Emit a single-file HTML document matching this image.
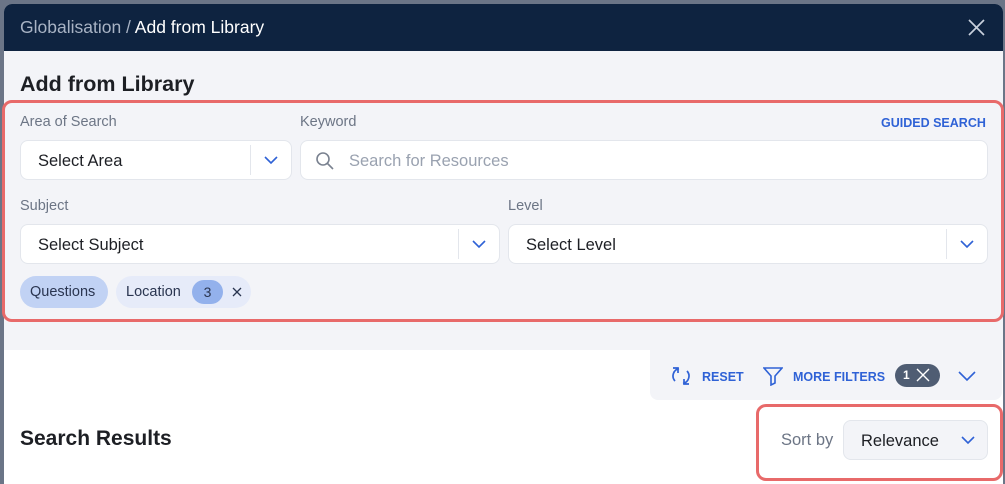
<!DOCTYPE html>
<html><head><style>
*{box-sizing:border-box;margin:0;padding:0}
body{width:1005px;height:482px;overflow:hidden;background:#6b7587;font-family:"Liberation Sans","DejaVu Sans",sans-serif;position:relative}
.modal{position:absolute;left:4px;top:4px;width:999px;height:480px;background:#fff;border-radius:8px 8px 0 0;overflow:hidden}
.hdr{height:47px;background:#0e2340;color:#fff;font-size:17.5px;padding:13px 0 0 16px}
.hdr .g{color:#a8b3c4}
.body{position:absolute;left:0;top:47px;width:999px;height:299px;background:#f3f4f8}
h1{position:absolute;left:16px;top:21px;font-size:21.5px;font-weight:bold;color:#1d1f24}
.red{position:absolute;border:3px solid #e86a6a;border-radius:10px}
.lbl{position:absolute;font-size:14.5px;color:#6c7585}
.inp{position:absolute;background:#fff;border:1px solid #e3e6ec;border-radius:8px;height:40px;font-size:16.5px;color:#1d1f24;padding:11px 0 0 17px}
.inp .sep{position:absolute;right:40px;top:4px;bottom:4px;border-left:1px solid #e3e6ec}
.chev{position:absolute;right:12px;top:14px}
.chip{position:absolute;height:32px;border-radius:16px;font-size:14.5px;color:#2a3550;padding:8px 10px}
.blue{color:#2f62d6;font-weight:bold;font-size:12.5px;position:absolute}
</style></head><body>
<div class="modal">
<div class="hdr"><span class="g">Globalisation / </span>Add from Library</div>
<svg style="position:absolute;right:18px;top:15px" width="17" height="17" viewBox="0 0 17 17"><path d="M1 1L16 16M16 1L1 16" stroke="#c8d0dc" stroke-width="1.7"/></svg>
<div class="body">
<h1>Add from Library</h1>
</div>
<div style="position:absolute;left:646px;top:346px;width:352px;height:50px;background:#f3f4f8;border-radius:0 0 8px 8px"></div>
<svg style="position:absolute;left:666px;top:361px" width="22" height="22" viewBox="0 0 22 22" fill="none" stroke="#2f62d6" stroke-width="1.7"><path d="M5 16A7.5 7.5 0 0 1 9 3.6M3 3h5v5M17 6A7.5 7.5 0 0 1 13 18.4M19 19h-5v-5"/></svg>
<div class="blue" style="left:698px;top:366px">RESET</div>
<svg style="position:absolute;left:759px;top:362px" width="20" height="20" viewBox="0 0 20 20" fill="none" stroke="#2f62d6" stroke-width="1.6"><path d="M1 2h18l-7 8v7l-4 2v-9z"/></svg>
<div class="blue" style="left:789px;top:366px">MORE FILTERS</div>
<div style="position:absolute;left:891px;top:360px;width:45px;height:23px;border-radius:12px;background:#4f5d73;color:#fff;font-size:12px;font-weight:bold;padding:4px 0 0 8px">1</div>
<svg style="position:absolute;left:912px;top:364px" width="14" height="14" viewBox="0 0 14 14"><path d="M1 1L13 13M13 1L1 13" stroke="#fff" stroke-width="1.4"/></svg>
<svg style="position:absolute;left:953px;top:366px" width="20" height="12" viewBox="0 0 20 12"><path d="M2 2l8 8 8-8" fill="none" stroke="#2f62d6" stroke-width="1.6"/></svg>
<div style="position:absolute;left:16px;top:423px;font-size:21px;font-weight:bold;color:#1d1f24">Search Results</div>
<div style="position:absolute;left:777px;top:427px;font-size:16.5px;color:#6c7585">Sort by</div>
<div class="inp" style="left:839px;top:416px;width:145px;background:#f3f4f8;padding-left:17px">Relevance<svg class="chev" style="top:15px" width="14" height="9" viewBox="0 0 14 9"><path d="M1 1l6 6 6-6" fill="none" stroke="#2f62d6" stroke-width="1.6"/></svg></div>
</div>
<div class="red" style="left:2px;top:100px;width:1002px;height:222px"></div>
<div class="red" style="left:756px;top:404px;width:247px;height:77px"></div>
<div class="lbl" style="left:20px;top:114px">Area of Search</div>
<div class="lbl" style="left:300px;top:114px">Keyword</div>
<div class="blue" style="left:881px;top:116px">GUIDED SEARCH</div>
<div class="inp" style="left:20px;top:140px;width:272px">Select Area<div class="sep"></div><svg class="chev" width="16" height="10" viewBox="0 0 16 10"><path d="M2 2l6 6 6-6" fill="none" stroke="#2f62d6" stroke-width="1.6"/></svg></div>
<div class="inp" style="left:300px;top:140px;width:688px;color:#9aa2b0;padding-left:48px">Search for Resources
<svg style="position:absolute;left:14px;top:10px" width="20" height="20" viewBox="0 0 20 20" fill="none" stroke="#7a8290" stroke-width="1.6"><circle cx="8" cy="8" r="6"/><path d="M12.5 12.5L18 18"/></svg></div>
<div class="lbl" style="left:20px;top:198px">Subject</div>
<div class="lbl" style="left:508px;top:198px">Level</div>
<div class="inp" style="left:20px;top:224px;width:480px">Select Subject<div class="sep"></div><svg class="chev" width="16" height="10" viewBox="0 0 16 10"><path d="M2 2l6 6 6-6" fill="none" stroke="#2f62d6" stroke-width="1.6"/></svg></div>
<div class="inp" style="left:508px;top:224px;width:480px">Select Level<div class="sep"></div><svg class="chev" width="16" height="10" viewBox="0 0 16 10"><path d="M2 2l6 6 6-6" fill="none" stroke="#2f62d6" stroke-width="1.6"/></svg></div>
<div class="chip" style="left:20px;top:276px;width:88px;background:#c1d2f4">Questions</div>
<div class="chip" style="left:116px;top:276px;width:135px;background:#e6ebf9">Location</div>
<div style="position:absolute;left:192px;top:280px;width:31px;height:24px;border-radius:12px;background:#93b1ec;color:#2a3550;font-size:14px;text-align:center;padding-top:4px">3</div>
<svg style="position:absolute;left:232px;top:287px" width="10" height="10" viewBox="0 0 10 10"><path d="M1 1L9 9M9 1L1 9" stroke="#2a3550" stroke-width="1.3"/></svg>
</body></html>
